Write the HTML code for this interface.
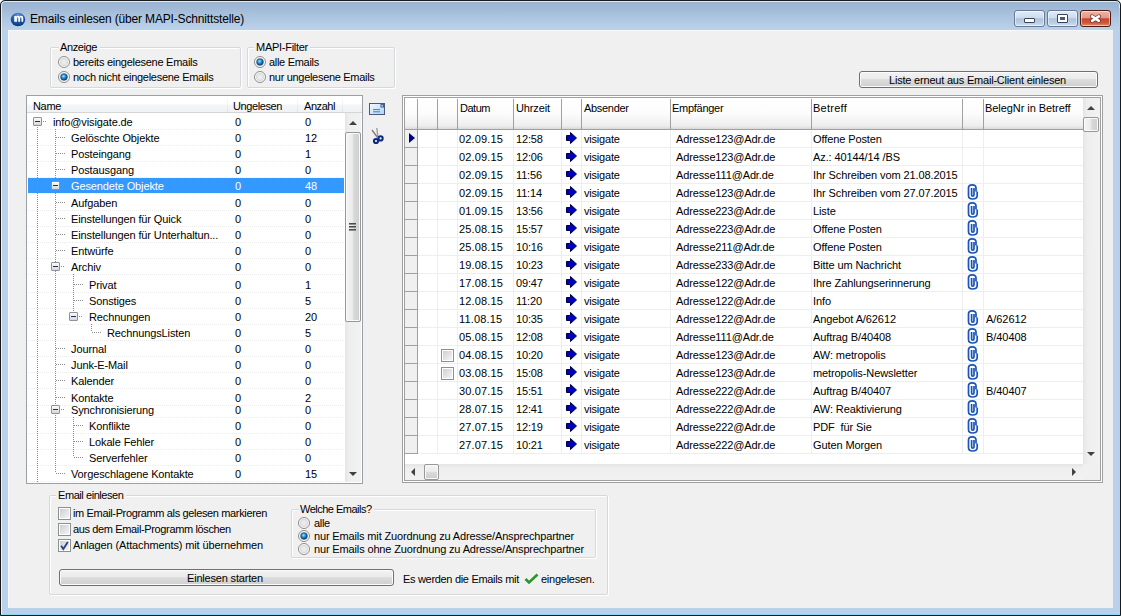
<!DOCTYPE html><html><head><meta charset="utf-8"><style>
*{margin:0;padding:0;box-sizing:border-box}
html,body{width:1121px;height:616px;overflow:hidden;background:#fff}
body{position:relative;font-family:"Liberation Sans",sans-serif;font-size:11px;color:#000}
.ab{position:absolute}
.t{position:absolute;white-space:pre;line-height:13px;font-size:11px}
.grp{position:absolute;border:1px solid #d6d9dc;border-radius:2px;box-shadow:inset 1px 1px 0 #fff,1px 1px 0 #fff}
.lblbg{position:absolute;background:#f0f0f0;height:9px}
.chk{position:absolute;width:13px;height:13px;border:1px solid #8e8f8f;background:#fff}
.chk::after{content:"";position:absolute;left:1px;top:1px;width:9px;height:9px;background:linear-gradient(135deg,#cbcfd5,#f4f4f4)}
.btn{position:absolute;border:1px solid #707070;border-radius:3px;
 background:linear-gradient(#f2f2f2 0,#ebebeb 45%,#dddddd 50%,#cfcfcf 100%);box-shadow:inset 0 0 0 1px #fbfbfb}
.dotv{position:absolute;width:1px;background:repeating-linear-gradient(#8c8c8c 0 1px,transparent 1px 2px)}
.doth{position:absolute;height:1px;background:repeating-linear-gradient(90deg,#8c8c8c 0 1px,transparent 1px 2px)}
.rsep{position:absolute;height:1px;left:28px;width:316px;background:repeating-linear-gradient(90deg,#ececec 0 1px,transparent 1px 2px)}
.exp{position:absolute;width:9px;height:9px;border:1px solid #919191;border-radius:1px;background:linear-gradient(#fbfbfb,#d8d8d8)}
.exp::after{content:"";position:absolute;left:1px;top:3px;width:5px;height:1px;background:#1f2f5a}
.gl{position:absolute;background:#eeeeee}
</style></head><body>
<svg width="0" height="0" style="position:absolute"><defs>
<radialGradient id="rf" cx="50%" cy="50%" r="50%"><stop offset="0" stop-color="#f0f0f0"/><stop offset="0.7" stop-color="#e4e4e4"/><stop offset="1" stop-color="#d2d2d2"/></radialGradient>
<radialGradient id="rd" cx="42%" cy="38%" r="60%"><stop offset="0" stop-color="#9ee6ff"/><stop offset="0.45" stop-color="#2a9ad8"/><stop offset="1" stop-color="#0a3f78"/></radialGradient>
</defs></svg>
<div class="ab" style="left:0;top:0;width:1121px;height:616px;background:#b9d1ea;border-radius:5px 5px 0 0"></div>
<div class="ab" style="left:0;top:0;width:1121px;height:31px;border-radius:5px 5px 0 0;background:linear-gradient(#98b2cf 0,#9fb9d6 8px,#adc6e1 18px,#bad1e9 29px,#bcd3eb 31px)"></div>
<div class="ab" style="left:0;top:0;width:1121px;height:616px;border:1px solid #1a1a1a;border-radius:5px 5px 0 0;box-shadow:inset 0 0 0 1px rgba(255,255,255,.7)"></div>
<div class="ab" style="left:1px;top:614px;width:1119px;height:1px;background:#8fd6ee"></div>
<div class="ab" style="left:1119px;top:8px;width:1px;height:607px;background:#9edcf2"></div>
<svg class="ab" style="left:10px;top:12px" width="17" height="16" viewBox="0 0 17 16">
<defs><radialGradient id="ig" cx="50%" cy="25%" r="80%"><stop offset="0" stop-color="#6f9be0"/><stop offset="0.55" stop-color="#1f56a8"/><stop offset="1" stop-color="#0a2c6a"/></radialGradient></defs>
<ellipse cx="8" cy="7.5" rx="7.2" ry="6.8" fill="url(#ig)"/>
<path d="M4.3 9.8V4H6.1V4.7Q6.8 3.8 7.9 3.8Q9 3.8 9.5 4.8Q10.3 3.8 11.5 3.8Q13.2 3.8 13.2 6V9.8H11.5V6.4Q11.5 5.3 10.8 5.3Q10 5.3 10 6.4V9.8H8.3V6.4Q8.3 5.3 7.6 5.3Q6.9 5.3 6.9 6.4V9.8Z" fill="#fff"/>
</svg>
<div class="t" style="left:30px;top:12px;font-size:12px;letter-spacing:-0.165px;line-height:15px;">Emails einlesen (über MAPI-Schnittstelle)</div>
<div class="ab" style="left:1014px;top:10px;width:31px;height:17px;border:1px solid #6a7a95;border-radius:3px;background:linear-gradient(#e1ebf6 0,#cddcee 45%,#aec3dc 52%,#bccfe6 80%,#d3e3f4 100%);box-shadow:inset 0 0 0 1px rgba(255,255,255,.5)"></div>
<div class="ab" style="left:1047px;top:10px;width:31px;height:17px;border:1px solid #6a7a95;border-radius:3px;background:linear-gradient(#e1ebf6 0,#cddcee 45%,#aec3dc 52%,#bccfe6 80%,#d3e3f4 100%);box-shadow:inset 0 0 0 1px rgba(255,255,255,.5)"></div>
<div class="ab" style="left:1080px;top:10px;width:31px;height:17px;border:1px solid #4a1c16;border-radius:3px;background:linear-gradient(#eeb3a6 0,#e49a88 45%,#c9452c 52%,#d0583c 80%,#e38e6e 100%);box-shadow:inset 0 0 0 1px rgba(255,255,255,.5)"></div>
<div class="ab" style="left:1024px;top:18px;width:11px;height:5px;background:#fff;border:1px solid #3a4458;border-radius:1px"></div>
<div class="ab" style="left:1057px;top:14px;width:11px;height:9px;background:#fff;border:1px solid #3a4458;border-radius:1px"></div>
<div class="ab" style="left:1060px;top:17px;width:5px;height:3px;background:#4a5a75;"></div>
<svg class="ab" style="left:1089px;top:13px" width="12" height="11" viewBox="0 0 12 11">
<path d="M3.1 3.4L9.9 7.8M9.9 3.4L3.1 7.8" stroke="#5a3030" stroke-opacity=".85" stroke-width="4.2" stroke-linecap="round"/>
<path d="M3.1 3.4L9.9 7.8M9.9 3.4L3.1 7.8" stroke="#fff" stroke-width="2.6" stroke-linecap="round"/>
</svg>
<div class="ab" style="left:8px;top:30px;width:1105px;height:578px;background:#f0f0f0;border:1px solid #f6f9fc;border-right:0;border-bottom:0"></div>
<div class="grp" style="left:50px;top:47px;width:191px;height:41px"></div>
<div class="lblbg" style="left:59px;top:45px;width:41px"></div>
<div class="t" style="left:60px;top:41px;letter-spacing:-0.395px;">Anzeige</div>
<svg class="ab" style="left:58px;top:56px" width="12" height="12" viewBox="0 0 12 12"><circle cx="6" cy="6" r="5.5" fill="#fff" stroke="#8a8a8a" stroke-width="1"/><circle cx="6" cy="6" r="4.2" fill="url(#rf)"/></svg>
<div class="t" style="left:73px;top:56px;letter-spacing:-0.268px;">bereits eingelesene Emails</div>
<svg class="ab" style="left:58px;top:71px" width="12" height="12" viewBox="0 0 12 12"><circle cx="6" cy="6" r="5.5" fill="#fff" stroke="#8a8a8a" stroke-width="1"/><circle cx="6" cy="6" r="4.2" fill="url(#rf)"/><circle cx="6" cy="6" r="3.3" fill="url(#rd)" stroke="#123f70" stroke-width="0.6"/></svg>
<div class="t" style="left:73px;top:71px;letter-spacing:-0.279px;">noch nicht eingelesene Emails</div>
<div class="grp" style="left:247px;top:47px;width:148px;height:41px"></div>
<div class="lblbg" style="left:254px;top:45px;width:56px"></div>
<div class="t" style="left:256px;top:41px;letter-spacing:-0.273px;">MAPI-Filter</div>
<svg class="ab" style="left:254px;top:56px" width="12" height="12" viewBox="0 0 12 12"><circle cx="6" cy="6" r="5.5" fill="#fff" stroke="#8a8a8a" stroke-width="1"/><circle cx="6" cy="6" r="4.2" fill="url(#rf)"/><circle cx="6" cy="6" r="3.3" fill="url(#rd)" stroke="#123f70" stroke-width="0.6"/></svg>
<div class="t" style="left:269px;top:56px;letter-spacing:-0.3px;">alle Emails</div>
<svg class="ab" style="left:254px;top:71px" width="12" height="12" viewBox="0 0 12 12"><circle cx="6" cy="6" r="5.5" fill="#fff" stroke="#8a8a8a" stroke-width="1"/><circle cx="6" cy="6" r="4.2" fill="url(#rf)"/></svg>
<div class="t" style="left:269px;top:71px;letter-spacing:-0.305px;">nur ungelesene Emails</div>
<div class="btn" style="left:859px;top:71px;width:239px;height:17px"></div>
<div class="t" style="left:889px;top:74px;letter-spacing:-0.201px;">Liste erneut aus Email-Client einlesen</div>
<div class="ab" style="left:26px;top:95px;width:337px;height:389px;background:#fff;border:1px solid #9aa0a8"></div>
<div class="ab" style="left:27px;top:96px;width:335px;height:17px;background:linear-gradient(#fff 0,#fff 45%,#f4f5f7 55%,#eff1f4 100%)"></div>
<div class="ab" style="left:27px;top:112px;width:335px;height:1px;background:#d5d5d5"></div>
<div class="ab" style="left:227px;top:96px;width:1px;height:16px;background:linear-gradient(#fff,#dfe3e8)"></div>
<div class="ab" style="left:297px;top:96px;width:1px;height:16px;background:linear-gradient(#fff,#dfe3e8)"></div>
<div class="ab" style="left:342px;top:96px;width:1px;height:16px;background:linear-gradient(#fff,#dfe3e8)"></div>
<div class="t" style="left:33px;top:100px;letter-spacing:-0.336px;">Name</div>
<div class="t" style="left:233px;top:100px;letter-spacing:-0.399px;">Ungelesen</div>
<div class="t" style="left:304px;top:100px;letter-spacing:-0.440px;">Anzahl</div>
<div class="rsep" style="top:129px"></div>
<div class="rsep" style="top:145px"></div>
<div class="rsep" style="top:161px"></div>
<div class="rsep" style="top:177px"></div>
<div class="rsep" style="top:193px"></div>
<div class="rsep" style="top:210px"></div>
<div class="rsep" style="top:226px"></div>
<div class="rsep" style="top:242px"></div>
<div class="rsep" style="top:258px"></div>
<div class="rsep" style="top:274px"></div>
<div class="rsep" style="top:292px"></div>
<div class="rsep" style="top:308px"></div>
<div class="rsep" style="top:324px"></div>
<div class="rsep" style="top:340px"></div>
<div class="rsep" style="top:356px"></div>
<div class="rsep" style="top:372px"></div>
<div class="rsep" style="top:388px"></div>
<div class="rsep" style="top:405px"></div>
<div class="rsep" style="top:417px"></div>
<div class="rsep" style="top:433px"></div>
<div class="rsep" style="top:449px"></div>
<div class="rsep" style="top:465px"></div>
<div class="rsep" style="top:481px"></div>
<div class="ab" style="left:28px;top:178px;width:316px;height:15px;background:#3399ff"></div>
<div class="dotv" style="left:37px;top:127px;height:355px"></div>
<div class="dotv" style="left:55px;top:129px;height:344px"></div>
<div class="dotv" style="left:73px;top:274px;height:42px"></div>
<div class="dotv" style="left:91px;top:324px;height:8px"></div>
<div class="dotv" style="left:73px;top:417px;height:40px"></div>
<div class="exp" style="left:33px;top:117px"></div>
<div class="doth" style="left:43px;top:121px;width:4px"></div>
<div class="t" style="left:53px;top:116px;letter-spacing:-0.12px;">info@visigate.de</div>
<div class="t" style="left:235px;top:116px;">0</div>
<div class="t" style="left:305px;top:116px;">0</div>
<div class="doth" style="left:56px;top:137px;width:9px"></div>
<div class="t" style="left:71px;top:132px;letter-spacing:-0.12px;">Gelöschte Objekte</div>
<div class="t" style="left:235px;top:132px;">0</div>
<div class="t" style="left:305px;top:132px;">12</div>
<div class="doth" style="left:56px;top:153px;width:9px"></div>
<div class="t" style="left:71px;top:148px;letter-spacing:-0.12px;">Posteingang</div>
<div class="t" style="left:235px;top:148px;">0</div>
<div class="t" style="left:305px;top:148px;">1</div>
<div class="doth" style="left:56px;top:169px;width:9px"></div>
<div class="t" style="left:71px;top:164px;letter-spacing:-0.12px;">Postausgang</div>
<div class="t" style="left:235px;top:164px;">0</div>
<div class="t" style="left:305px;top:164px;">0</div>
<div class="exp" style="left:51px;top:181px"></div>
<div class="doth" style="left:61px;top:185px;width:4px"></div>
<div class="t" style="left:71px;top:180px;letter-spacing:-0.12px;color:#fff;">Gesendete Objekte</div>
<div class="t" style="left:235px;top:180px;color:#fff;">0</div>
<div class="t" style="left:305px;top:180px;color:#fff;">48</div>
<div class="doth" style="left:56px;top:202px;width:9px"></div>
<div class="t" style="left:71px;top:197px;letter-spacing:-0.12px;">Aufgaben</div>
<div class="t" style="left:235px;top:197px;">0</div>
<div class="t" style="left:305px;top:197px;">0</div>
<div class="doth" style="left:56px;top:218px;width:9px"></div>
<div class="t" style="left:71px;top:213px;letter-spacing:-0.12px;">Einstellungen für Quick</div>
<div class="t" style="left:235px;top:213px;">0</div>
<div class="t" style="left:305px;top:213px;">0</div>
<div class="doth" style="left:56px;top:234px;width:9px"></div>
<div class="t" style="left:71px;top:229px;letter-spacing:-0.12px;">Einstellungen für Unterhaltun...</div>
<div class="t" style="left:235px;top:229px;">0</div>
<div class="t" style="left:305px;top:229px;">0</div>
<div class="doth" style="left:56px;top:250px;width:9px"></div>
<div class="t" style="left:71px;top:245px;letter-spacing:-0.12px;">Entwürfe</div>
<div class="t" style="left:235px;top:245px;">0</div>
<div class="t" style="left:305px;top:245px;">0</div>
<div class="exp" style="left:51px;top:262px"></div>
<div class="doth" style="left:61px;top:266px;width:4px"></div>
<div class="t" style="left:71px;top:261px;letter-spacing:-0.12px;">Archiv</div>
<div class="t" style="left:235px;top:261px;">0</div>
<div class="t" style="left:305px;top:261px;">0</div>
<div class="doth" style="left:74px;top:284px;width:9px"></div>
<div class="t" style="left:89px;top:279px;letter-spacing:-0.12px;">Privat</div>
<div class="t" style="left:235px;top:279px;">0</div>
<div class="t" style="left:305px;top:279px;">1</div>
<div class="doth" style="left:74px;top:300px;width:9px"></div>
<div class="t" style="left:89px;top:295px;letter-spacing:-0.12px;">Sonstiges</div>
<div class="t" style="left:235px;top:295px;">0</div>
<div class="t" style="left:305px;top:295px;">5</div>
<div class="exp" style="left:69px;top:312px"></div>
<div class="doth" style="left:79px;top:316px;width:4px"></div>
<div class="t" style="left:89px;top:311px;letter-spacing:-0.12px;">Rechnungen</div>
<div class="t" style="left:235px;top:311px;">0</div>
<div class="t" style="left:305px;top:311px;">20</div>
<div class="doth" style="left:92px;top:332px;width:9px"></div>
<div class="t" style="left:107px;top:327px;letter-spacing:-0.12px;">RechnungsListen</div>
<div class="t" style="left:235px;top:327px;">0</div>
<div class="t" style="left:305px;top:327px;">5</div>
<div class="doth" style="left:56px;top:348px;width:9px"></div>
<div class="t" style="left:71px;top:343px;letter-spacing:-0.12px;">Journal</div>
<div class="t" style="left:235px;top:343px;">0</div>
<div class="t" style="left:305px;top:343px;">0</div>
<div class="doth" style="left:56px;top:364px;width:9px"></div>
<div class="t" style="left:71px;top:359px;letter-spacing:-0.12px;">Junk-E-Mail</div>
<div class="t" style="left:235px;top:359px;">0</div>
<div class="t" style="left:305px;top:359px;">0</div>
<div class="doth" style="left:56px;top:380px;width:9px"></div>
<div class="t" style="left:71px;top:375px;letter-spacing:-0.12px;">Kalender</div>
<div class="t" style="left:235px;top:375px;">0</div>
<div class="t" style="left:305px;top:375px;">0</div>
<div class="doth" style="left:56px;top:397px;width:9px"></div>
<div class="t" style="left:71px;top:392px;letter-spacing:-0.12px;">Kontakte</div>
<div class="t" style="left:235px;top:392px;">0</div>
<div class="t" style="left:305px;top:392px;">2</div>
<div class="exp" style="left:51px;top:405px"></div>
<div class="doth" style="left:61px;top:409px;width:4px"></div>
<div class="t" style="left:71px;top:404px;letter-spacing:-0.12px;">Synchronisierung</div>
<div class="t" style="left:235px;top:404px;">0</div>
<div class="t" style="left:305px;top:404px;">0</div>
<div class="doth" style="left:74px;top:425px;width:9px"></div>
<div class="t" style="left:89px;top:420px;letter-spacing:-0.12px;">Konflikte</div>
<div class="t" style="left:235px;top:420px;">0</div>
<div class="t" style="left:305px;top:420px;">0</div>
<div class="doth" style="left:74px;top:441px;width:9px"></div>
<div class="t" style="left:89px;top:436px;letter-spacing:-0.12px;">Lokale Fehler</div>
<div class="t" style="left:235px;top:436px;">0</div>
<div class="t" style="left:305px;top:436px;">0</div>
<div class="doth" style="left:74px;top:457px;width:9px"></div>
<div class="t" style="left:89px;top:452px;letter-spacing:-0.12px;">Serverfehler</div>
<div class="t" style="left:235px;top:452px;">0</div>
<div class="t" style="left:305px;top:452px;">0</div>
<div class="doth" style="left:56px;top:473px;width:9px"></div>
<div class="t" style="left:71px;top:468px;letter-spacing:-0.12px;">Vorgeschlagene Kontakte</div>
<div class="t" style="left:235px;top:468px;">0</div>
<div class="t" style="left:305px;top:468px;">15</div>
<div class="ab" style="left:345px;top:113px;width:16px;height:369px;background:linear-gradient(90deg,#e5e5e5 0,#eeeeee 25%,#f2f2f2 100%)"></div>
<div class="ab" style="left:349px;top:121px;width:0;height:0;border-left:4px solid transparent;border-right:4px solid transparent;border-bottom:4px solid #404040"></div>
<div class="ab" style="left:349px;top:472px;width:0;height:0;border-left:4px solid transparent;border-right:4px solid transparent;border-top:4px solid #404040"></div>
<div class="ab" style="left:345px;top:132px;width:16px;height:190px;border:1px solid #979797;border-radius:2px;background:linear-gradient(90deg,#f4f4f4 0,#ececec 45%,#d9d9d9 55%,#cdcdcd 100%);box-shadow:inset 0 0 0 1px #fafafa"></div>
<div class="ab" style="left:349px;top:223px;width:7px;height:2px;background:linear-gradient(#2a2a2a,#b0b0b0)"></div>
<div class="ab" style="left:349px;top:226px;width:7px;height:2px;background:linear-gradient(#2a2a2a,#b0b0b0)"></div>
<div class="ab" style="left:349px;top:229px;width:7px;height:2px;background:linear-gradient(#2a2a2a,#b0b0b0)"></div>
<svg class="ab" style="left:368px;top:102px" width="18" height="14" viewBox="0 0 18 14">
<defs><linearGradient id="eg" x1="0" y1="0" x2="1" y2="1"><stop offset="0" stop-color="#f5fbff"/><stop offset="1" stop-color="#a9d3f5"/></linearGradient></defs>
<rect x="1.5" y="1.5" width="15" height="11" fill="url(#eg)" stroke="#4c5a78" stroke-width="1"/>
<rect x="12.5" y="2" width="3.5" height="3.5" fill="#3a5a90"/><rect x="13.3" y="2.8" width="1.8" height="1.8" fill="#9cc4ee"/>
<path d="M5 7.6H12M5 9.8H12" stroke="#3a7fd0" stroke-width="1"/>
</svg>
<svg class="ab" style="left:370px;top:127px" width="15" height="18" viewBox="0 0 15 18">
<path d="M2 3L7.5 10.5" stroke="#7a7a7a" stroke-width="1.3"/><path d="M6.8 1L8 10.5" stroke="#9a9a9a" stroke-width="1.3"/>
<circle cx="6" cy="14" r="2.1" fill="none" stroke="#0c2a80" stroke-width="2"/><circle cx="10.6" cy="11.4" r="2.1" fill="none" stroke="#0c2a80" stroke-width="2"/>
</svg>
<div class="ab" style="left:402px;top:95px;width:701px;height:388px;border:1px solid #a0a0a0;background:#fff"></div>
<div class="ab" style="left:404px;top:97px;width:697px;height:384px;border:1px solid #a0a0a0;background:#fff"></div>
<div class="ab" style="left:405px;top:98px;width:678px;height:31px;background:linear-gradient(#fff 0,#fcfcfc 50%,#f3f3f3 75%,#eeeeee 90%,#d8d8d8 100%)"></div>
<div class="ab" style="left:405px;top:129px;width:678px;height:1px;background:#a0a0a0"></div>
<div class="ab" style="left:417px;top:99px;width:1px;height:30px;background:#a0a0a0"></div>
<div class="ab" style="left:437px;top:99px;width:1px;height:30px;background:#a0a0a0"></div>
<div class="ab" style="left:457px;top:99px;width:1px;height:30px;background:#a0a0a0"></div>
<div class="ab" style="left:513px;top:99px;width:1px;height:30px;background:#a0a0a0"></div>
<div class="ab" style="left:561px;top:99px;width:1px;height:30px;background:#a0a0a0"></div>
<div class="ab" style="left:581px;top:99px;width:1px;height:30px;background:#a0a0a0"></div>
<div class="ab" style="left:670px;top:99px;width:1px;height:30px;background:#a0a0a0"></div>
<div class="ab" style="left:811px;top:99px;width:1px;height:30px;background:#a0a0a0"></div>
<div class="ab" style="left:962px;top:99px;width:1px;height:30px;background:#a0a0a0"></div>
<div class="ab" style="left:983px;top:99px;width:1px;height:30px;background:#a0a0a0"></div>
<div class="t" style="left:460px;top:102px;letter-spacing:-0.481px;">Datum</div>
<div class="t" style="left:516px;top:102px;letter-spacing:-0.121px;">Uhrzeit</div>
<div class="t" style="left:584px;top:102px;letter-spacing:-0.312px;">Absender</div>
<div class="t" style="left:672px;top:102px;letter-spacing:-0.279px;">Empfänger</div>
<div class="t" style="left:813px;top:102px;letter-spacing:0.254px;">Betreff</div>
<div class="t" style="left:985px;top:102px;letter-spacing:-0.062px;">BelegNr in Betreff</div>
<div class="gl" style="left:437px;top:130px;width:1px;height:324px"></div>
<div class="gl" style="left:457px;top:130px;width:1px;height:324px"></div>
<div class="gl" style="left:513px;top:130px;width:1px;height:324px"></div>
<div class="gl" style="left:561px;top:130px;width:1px;height:324px"></div>
<div class="gl" style="left:581px;top:130px;width:1px;height:324px"></div>
<div class="gl" style="left:670px;top:130px;width:1px;height:324px"></div>
<div class="gl" style="left:811px;top:130px;width:1px;height:324px"></div>
<div class="gl" style="left:962px;top:130px;width:1px;height:324px"></div>
<div class="gl" style="left:983px;top:130px;width:1px;height:324px"></div>
<div class="ab" style="left:405px;top:130px;width:12px;height:324px;background:#f0f0f0"></div>
<div class="ab" style="left:417px;top:130px;width:1px;height:324px;background:#a0a0a0"></div>
<div class="gl" style="left:418px;top:147px;width:665px;height:1px"></div>
<div class="ab" style="left:405px;top:147px;width:12px;height:1px;background:#a0a0a0"></div>
<div class="t" style="left:459px;top:133px;letter-spacing:0.15px;">02.09.15</div>
<div class="t" style="left:516px;top:133px;letter-spacing:-0.15px;">12:58</div>
<svg class="ab" style="left:566px;top:132px" width="11" height="12" viewBox="0 0 11 12"><path d="M0.5 3.5H4.5V0.5L10.5 6L4.5 11.5V8.5H0.5Z" fill="#0000c0" stroke="#00004a" stroke-width="1"/></svg>
<div class="t" style="left:584px;top:133px;letter-spacing:-0.2px;">visigate</div>
<div class="t" style="left:676px;top:133px;letter-spacing:-0.14px;">Adresse123@Adr.de</div>
<div class="t" style="left:813px;top:133px;letter-spacing:-0.1px;">Offene Posten</div>
<div class="gl" style="left:418px;top:165px;width:665px;height:1px"></div>
<div class="ab" style="left:405px;top:165px;width:12px;height:1px;background:#a0a0a0"></div>
<div class="t" style="left:459px;top:151px;letter-spacing:0.15px;">02.09.15</div>
<div class="t" style="left:516px;top:151px;letter-spacing:-0.15px;">12:06</div>
<svg class="ab" style="left:566px;top:150px" width="11" height="12" viewBox="0 0 11 12"><path d="M0.5 3.5H4.5V0.5L10.5 6L4.5 11.5V8.5H0.5Z" fill="#0000c0" stroke="#00004a" stroke-width="1"/></svg>
<div class="t" style="left:584px;top:151px;letter-spacing:-0.2px;">visigate</div>
<div class="t" style="left:676px;top:151px;letter-spacing:-0.14px;">Adresse123@Adr.de</div>
<div class="t" style="left:813px;top:151px;letter-spacing:-0.1px;">Az.: 40144/14 /BS</div>
<div class="gl" style="left:418px;top:183px;width:665px;height:1px"></div>
<div class="ab" style="left:405px;top:183px;width:12px;height:1px;background:#a0a0a0"></div>
<div class="t" style="left:459px;top:169px;letter-spacing:0.15px;">02.09.15</div>
<div class="t" style="left:516px;top:169px;letter-spacing:-0.15px;">11:56</div>
<svg class="ab" style="left:566px;top:168px" width="11" height="12" viewBox="0 0 11 12"><path d="M0.5 3.5H4.5V0.5L10.5 6L4.5 11.5V8.5H0.5Z" fill="#0000c0" stroke="#00004a" stroke-width="1"/></svg>
<div class="t" style="left:584px;top:169px;letter-spacing:-0.2px;">visigate</div>
<div class="t" style="left:676px;top:169px;letter-spacing:-0.14px;">Adresse111@Adr.de</div>
<div class="t" style="left:813px;top:169px;letter-spacing:-0.1px;">Ihr Schreiben vom 21.08.2015</div>
<div class="gl" style="left:418px;top:201px;width:665px;height:1px"></div>
<div class="ab" style="left:405px;top:201px;width:12px;height:1px;background:#a0a0a0"></div>
<div class="t" style="left:459px;top:187px;letter-spacing:0.15px;">02.09.15</div>
<div class="t" style="left:516px;top:187px;letter-spacing:-0.15px;">11:14</div>
<svg class="ab" style="left:566px;top:186px" width="11" height="12" viewBox="0 0 11 12"><path d="M0.5 3.5H4.5V0.5L10.5 6L4.5 11.5V8.5H0.5Z" fill="#0000c0" stroke="#00004a" stroke-width="1"/></svg>
<div class="t" style="left:584px;top:187px;letter-spacing:-0.2px;">visigate</div>
<div class="t" style="left:676px;top:187px;letter-spacing:-0.14px;">Adresse123@Adr.de</div>
<div class="t" style="left:813px;top:187px;letter-spacing:-0.1px;">Ihr Schreiben vom 27.07.2015</div>
<svg class="ab" style="left:966px;top:183px" width="14" height="19" viewBox="0 0 14 19"><path d="M10 8.5V5Q10 1.8 6.2 1.8Q2.5 1.8 2.5 5V12.5Q2.5 16 6.5 16Q11.2 16 11.2 12.5V8.5M5.6 5V12Q5.6 13.2 6.8 13.2Q8 13.2 8 12V5" fill="none" stroke="#1a55b5" stroke-width="1.7"/></svg>
<div class="gl" style="left:418px;top:219px;width:665px;height:1px"></div>
<div class="ab" style="left:405px;top:219px;width:12px;height:1px;background:#a0a0a0"></div>
<div class="t" style="left:459px;top:205px;letter-spacing:0.15px;">01.09.15</div>
<div class="t" style="left:516px;top:205px;letter-spacing:-0.15px;">13:56</div>
<svg class="ab" style="left:566px;top:204px" width="11" height="12" viewBox="0 0 11 12"><path d="M0.5 3.5H4.5V0.5L10.5 6L4.5 11.5V8.5H0.5Z" fill="#0000c0" stroke="#00004a" stroke-width="1"/></svg>
<div class="t" style="left:584px;top:205px;letter-spacing:-0.2px;">visigate</div>
<div class="t" style="left:676px;top:205px;letter-spacing:-0.14px;">Adresse223@Adr.de</div>
<div class="t" style="left:813px;top:205px;letter-spacing:-0.1px;">Liste</div>
<svg class="ab" style="left:966px;top:201px" width="14" height="19" viewBox="0 0 14 19"><path d="M10 8.5V5Q10 1.8 6.2 1.8Q2.5 1.8 2.5 5V12.5Q2.5 16 6.5 16Q11.2 16 11.2 12.5V8.5M5.6 5V12Q5.6 13.2 6.8 13.2Q8 13.2 8 12V5" fill="none" stroke="#1a55b5" stroke-width="1.7"/></svg>
<div class="gl" style="left:418px;top:237px;width:665px;height:1px"></div>
<div class="ab" style="left:405px;top:237px;width:12px;height:1px;background:#a0a0a0"></div>
<div class="t" style="left:459px;top:223px;letter-spacing:0.15px;">25.08.15</div>
<div class="t" style="left:516px;top:223px;letter-spacing:-0.15px;">15:57</div>
<svg class="ab" style="left:566px;top:222px" width="11" height="12" viewBox="0 0 11 12"><path d="M0.5 3.5H4.5V0.5L10.5 6L4.5 11.5V8.5H0.5Z" fill="#0000c0" stroke="#00004a" stroke-width="1"/></svg>
<div class="t" style="left:584px;top:223px;letter-spacing:-0.2px;">visigate</div>
<div class="t" style="left:676px;top:223px;letter-spacing:-0.14px;">Adresse223@Adr.de</div>
<div class="t" style="left:813px;top:223px;letter-spacing:-0.1px;">Offene Posten</div>
<svg class="ab" style="left:966px;top:219px" width="14" height="19" viewBox="0 0 14 19"><path d="M10 8.5V5Q10 1.8 6.2 1.8Q2.5 1.8 2.5 5V12.5Q2.5 16 6.5 16Q11.2 16 11.2 12.5V8.5M5.6 5V12Q5.6 13.2 6.8 13.2Q8 13.2 8 12V5" fill="none" stroke="#1a55b5" stroke-width="1.7"/></svg>
<div class="gl" style="left:418px;top:255px;width:665px;height:1px"></div>
<div class="ab" style="left:405px;top:255px;width:12px;height:1px;background:#a0a0a0"></div>
<div class="t" style="left:459px;top:241px;letter-spacing:0.15px;">25.08.15</div>
<div class="t" style="left:516px;top:241px;letter-spacing:-0.15px;">10:16</div>
<svg class="ab" style="left:566px;top:240px" width="11" height="12" viewBox="0 0 11 12"><path d="M0.5 3.5H4.5V0.5L10.5 6L4.5 11.5V8.5H0.5Z" fill="#0000c0" stroke="#00004a" stroke-width="1"/></svg>
<div class="t" style="left:584px;top:241px;letter-spacing:-0.2px;">visigate</div>
<div class="t" style="left:676px;top:241px;letter-spacing:-0.14px;">Adresse211@Adr.de</div>
<div class="t" style="left:813px;top:241px;letter-spacing:-0.1px;">Offene Posten</div>
<svg class="ab" style="left:966px;top:237px" width="14" height="19" viewBox="0 0 14 19"><path d="M10 8.5V5Q10 1.8 6.2 1.8Q2.5 1.8 2.5 5V12.5Q2.5 16 6.5 16Q11.2 16 11.2 12.5V8.5M5.6 5V12Q5.6 13.2 6.8 13.2Q8 13.2 8 12V5" fill="none" stroke="#1a55b5" stroke-width="1.7"/></svg>
<div class="gl" style="left:418px;top:273px;width:665px;height:1px"></div>
<div class="ab" style="left:405px;top:273px;width:12px;height:1px;background:#a0a0a0"></div>
<div class="t" style="left:459px;top:259px;letter-spacing:0.15px;">19.08.15</div>
<div class="t" style="left:516px;top:259px;letter-spacing:-0.15px;">10:23</div>
<svg class="ab" style="left:566px;top:258px" width="11" height="12" viewBox="0 0 11 12"><path d="M0.5 3.5H4.5V0.5L10.5 6L4.5 11.5V8.5H0.5Z" fill="#0000c0" stroke="#00004a" stroke-width="1"/></svg>
<div class="t" style="left:584px;top:259px;letter-spacing:-0.2px;">visigate</div>
<div class="t" style="left:676px;top:259px;letter-spacing:-0.14px;">Adresse233@Adr.de</div>
<div class="t" style="left:813px;top:259px;letter-spacing:-0.1px;">Bitte um Nachricht</div>
<svg class="ab" style="left:966px;top:255px" width="14" height="19" viewBox="0 0 14 19"><path d="M10 8.5V5Q10 1.8 6.2 1.8Q2.5 1.8 2.5 5V12.5Q2.5 16 6.5 16Q11.2 16 11.2 12.5V8.5M5.6 5V12Q5.6 13.2 6.8 13.2Q8 13.2 8 12V5" fill="none" stroke="#1a55b5" stroke-width="1.7"/></svg>
<div class="gl" style="left:418px;top:291px;width:665px;height:1px"></div>
<div class="ab" style="left:405px;top:291px;width:12px;height:1px;background:#a0a0a0"></div>
<div class="t" style="left:459px;top:277px;letter-spacing:0.15px;">17.08.15</div>
<div class="t" style="left:516px;top:277px;letter-spacing:-0.15px;">09:47</div>
<svg class="ab" style="left:566px;top:276px" width="11" height="12" viewBox="0 0 11 12"><path d="M0.5 3.5H4.5V0.5L10.5 6L4.5 11.5V8.5H0.5Z" fill="#0000c0" stroke="#00004a" stroke-width="1"/></svg>
<div class="t" style="left:584px;top:277px;letter-spacing:-0.2px;">visigate</div>
<div class="t" style="left:676px;top:277px;letter-spacing:-0.14px;">Adresse122@Adr.de</div>
<div class="t" style="left:813px;top:277px;letter-spacing:-0.1px;">Ihre Zahlungserinnerung</div>
<svg class="ab" style="left:966px;top:273px" width="14" height="19" viewBox="0 0 14 19"><path d="M10 8.5V5Q10 1.8 6.2 1.8Q2.5 1.8 2.5 5V12.5Q2.5 16 6.5 16Q11.2 16 11.2 12.5V8.5M5.6 5V12Q5.6 13.2 6.8 13.2Q8 13.2 8 12V5" fill="none" stroke="#1a55b5" stroke-width="1.7"/></svg>
<div class="gl" style="left:418px;top:309px;width:665px;height:1px"></div>
<div class="ab" style="left:405px;top:309px;width:12px;height:1px;background:#a0a0a0"></div>
<div class="t" style="left:459px;top:295px;letter-spacing:0.15px;">12.08.15</div>
<div class="t" style="left:516px;top:295px;letter-spacing:-0.15px;">11:20</div>
<svg class="ab" style="left:566px;top:294px" width="11" height="12" viewBox="0 0 11 12"><path d="M0.5 3.5H4.5V0.5L10.5 6L4.5 11.5V8.5H0.5Z" fill="#0000c0" stroke="#00004a" stroke-width="1"/></svg>
<div class="t" style="left:584px;top:295px;letter-spacing:-0.2px;">visigate</div>
<div class="t" style="left:676px;top:295px;letter-spacing:-0.14px;">Adresse122@Adr.de</div>
<div class="t" style="left:813px;top:295px;letter-spacing:-0.1px;">Info</div>
<div class="gl" style="left:418px;top:327px;width:665px;height:1px"></div>
<div class="ab" style="left:405px;top:327px;width:12px;height:1px;background:#a0a0a0"></div>
<div class="t" style="left:459px;top:313px;letter-spacing:0.15px;">11.08.15</div>
<div class="t" style="left:516px;top:313px;letter-spacing:-0.15px;">10:35</div>
<svg class="ab" style="left:566px;top:312px" width="11" height="12" viewBox="0 0 11 12"><path d="M0.5 3.5H4.5V0.5L10.5 6L4.5 11.5V8.5H0.5Z" fill="#0000c0" stroke="#00004a" stroke-width="1"/></svg>
<div class="t" style="left:584px;top:313px;letter-spacing:-0.2px;">visigate</div>
<div class="t" style="left:676px;top:313px;letter-spacing:-0.14px;">Adresse122@Adr.de</div>
<div class="t" style="left:813px;top:313px;letter-spacing:-0.1px;">Angebot A/62612</div>
<svg class="ab" style="left:966px;top:309px" width="14" height="19" viewBox="0 0 14 19"><path d="M10 8.5V5Q10 1.8 6.2 1.8Q2.5 1.8 2.5 5V12.5Q2.5 16 6.5 16Q11.2 16 11.2 12.5V8.5M5.6 5V12Q5.6 13.2 6.8 13.2Q8 13.2 8 12V5" fill="none" stroke="#1a55b5" stroke-width="1.7"/></svg>
<div class="t" style="left:986px;top:313px;letter-spacing:-0.06px;">A/62612</div>
<div class="gl" style="left:418px;top:345px;width:665px;height:1px"></div>
<div class="ab" style="left:405px;top:345px;width:12px;height:1px;background:#a0a0a0"></div>
<div class="t" style="left:459px;top:331px;letter-spacing:0.15px;">05.08.15</div>
<div class="t" style="left:516px;top:331px;letter-spacing:-0.15px;">12:08</div>
<svg class="ab" style="left:566px;top:330px" width="11" height="12" viewBox="0 0 11 12"><path d="M0.5 3.5H4.5V0.5L10.5 6L4.5 11.5V8.5H0.5Z" fill="#0000c0" stroke="#00004a" stroke-width="1"/></svg>
<div class="t" style="left:584px;top:331px;letter-spacing:-0.2px;">visigate</div>
<div class="t" style="left:676px;top:331px;letter-spacing:-0.14px;">Adresse111@Adr.de</div>
<div class="t" style="left:813px;top:331px;letter-spacing:-0.1px;">Auftrag B/40408</div>
<svg class="ab" style="left:966px;top:327px" width="14" height="19" viewBox="0 0 14 19"><path d="M10 8.5V5Q10 1.8 6.2 1.8Q2.5 1.8 2.5 5V12.5Q2.5 16 6.5 16Q11.2 16 11.2 12.5V8.5M5.6 5V12Q5.6 13.2 6.8 13.2Q8 13.2 8 12V5" fill="none" stroke="#1a55b5" stroke-width="1.7"/></svg>
<div class="t" style="left:986px;top:331px;letter-spacing:-0.06px;">B/40408</div>
<div class="gl" style="left:418px;top:363px;width:665px;height:1px"></div>
<div class="ab" style="left:405px;top:363px;width:12px;height:1px;background:#a0a0a0"></div>
<div class="t" style="left:459px;top:349px;letter-spacing:0.15px;">04.08.15</div>
<div class="t" style="left:516px;top:349px;letter-spacing:-0.15px;">10:20</div>
<svg class="ab" style="left:566px;top:348px" width="11" height="12" viewBox="0 0 11 12"><path d="M0.5 3.5H4.5V0.5L10.5 6L4.5 11.5V8.5H0.5Z" fill="#0000c0" stroke="#00004a" stroke-width="1"/></svg>
<div class="t" style="left:584px;top:349px;letter-spacing:-0.2px;">visigate</div>
<div class="t" style="left:676px;top:349px;letter-spacing:-0.14px;">Adresse123@Adr.de</div>
<div class="t" style="left:813px;top:349px;letter-spacing:-0.1px;">AW: metropolis</div>
<svg class="ab" style="left:966px;top:345px" width="14" height="19" viewBox="0 0 14 19"><path d="M10 8.5V5Q10 1.8 6.2 1.8Q2.5 1.8 2.5 5V12.5Q2.5 16 6.5 16Q11.2 16 11.2 12.5V8.5M5.6 5V12Q5.6 13.2 6.8 13.2Q8 13.2 8 12V5" fill="none" stroke="#1a55b5" stroke-width="1.7"/></svg>
<div class="chk" style="left:441px;top:349px"></div>
<div class="gl" style="left:418px;top:381px;width:665px;height:1px"></div>
<div class="ab" style="left:405px;top:381px;width:12px;height:1px;background:#a0a0a0"></div>
<div class="t" style="left:459px;top:367px;letter-spacing:0.15px;">03.08.15</div>
<div class="t" style="left:516px;top:367px;letter-spacing:-0.15px;">15:08</div>
<svg class="ab" style="left:566px;top:366px" width="11" height="12" viewBox="0 0 11 12"><path d="M0.5 3.5H4.5V0.5L10.5 6L4.5 11.5V8.5H0.5Z" fill="#0000c0" stroke="#00004a" stroke-width="1"/></svg>
<div class="t" style="left:584px;top:367px;letter-spacing:-0.2px;">visigate</div>
<div class="t" style="left:676px;top:367px;letter-spacing:-0.14px;">Adresse123@Adr.de</div>
<div class="t" style="left:813px;top:367px;letter-spacing:-0.1px;">metropolis-Newsletter</div>
<svg class="ab" style="left:966px;top:363px" width="14" height="19" viewBox="0 0 14 19"><path d="M10 8.5V5Q10 1.8 6.2 1.8Q2.5 1.8 2.5 5V12.5Q2.5 16 6.5 16Q11.2 16 11.2 12.5V8.5M5.6 5V12Q5.6 13.2 6.8 13.2Q8 13.2 8 12V5" fill="none" stroke="#1a55b5" stroke-width="1.7"/></svg>
<div class="chk" style="left:441px;top:367px"></div>
<div class="gl" style="left:418px;top:399px;width:665px;height:1px"></div>
<div class="ab" style="left:405px;top:399px;width:12px;height:1px;background:#a0a0a0"></div>
<div class="t" style="left:459px;top:385px;letter-spacing:0.15px;">30.07.15</div>
<div class="t" style="left:516px;top:385px;letter-spacing:-0.15px;">15:51</div>
<svg class="ab" style="left:566px;top:384px" width="11" height="12" viewBox="0 0 11 12"><path d="M0.5 3.5H4.5V0.5L10.5 6L4.5 11.5V8.5H0.5Z" fill="#0000c0" stroke="#00004a" stroke-width="1"/></svg>
<div class="t" style="left:584px;top:385px;letter-spacing:-0.2px;">visigate</div>
<div class="t" style="left:676px;top:385px;letter-spacing:-0.14px;">Adresse222@Adr.de</div>
<div class="t" style="left:813px;top:385px;letter-spacing:-0.1px;">Auftrag B/40407</div>
<svg class="ab" style="left:966px;top:381px" width="14" height="19" viewBox="0 0 14 19"><path d="M10 8.5V5Q10 1.8 6.2 1.8Q2.5 1.8 2.5 5V12.5Q2.5 16 6.5 16Q11.2 16 11.2 12.5V8.5M5.6 5V12Q5.6 13.2 6.8 13.2Q8 13.2 8 12V5" fill="none" stroke="#1a55b5" stroke-width="1.7"/></svg>
<div class="t" style="left:986px;top:385px;letter-spacing:-0.06px;">B/40407</div>
<div class="gl" style="left:418px;top:417px;width:665px;height:1px"></div>
<div class="ab" style="left:405px;top:417px;width:12px;height:1px;background:#a0a0a0"></div>
<div class="t" style="left:459px;top:403px;letter-spacing:0.15px;">28.07.15</div>
<div class="t" style="left:516px;top:403px;letter-spacing:-0.15px;">12:41</div>
<svg class="ab" style="left:566px;top:402px" width="11" height="12" viewBox="0 0 11 12"><path d="M0.5 3.5H4.5V0.5L10.5 6L4.5 11.5V8.5H0.5Z" fill="#0000c0" stroke="#00004a" stroke-width="1"/></svg>
<div class="t" style="left:584px;top:403px;letter-spacing:-0.2px;">visigate</div>
<div class="t" style="left:676px;top:403px;letter-spacing:-0.14px;">Adresse222@Adr.de</div>
<div class="t" style="left:813px;top:403px;letter-spacing:-0.1px;">AW: Reaktivierung</div>
<svg class="ab" style="left:966px;top:399px" width="14" height="19" viewBox="0 0 14 19"><path d="M10 8.5V5Q10 1.8 6.2 1.8Q2.5 1.8 2.5 5V12.5Q2.5 16 6.5 16Q11.2 16 11.2 12.5V8.5M5.6 5V12Q5.6 13.2 6.8 13.2Q8 13.2 8 12V5" fill="none" stroke="#1a55b5" stroke-width="1.7"/></svg>
<div class="gl" style="left:418px;top:435px;width:665px;height:1px"></div>
<div class="ab" style="left:405px;top:435px;width:12px;height:1px;background:#a0a0a0"></div>
<div class="t" style="left:459px;top:421px;letter-spacing:0.15px;">27.07.15</div>
<div class="t" style="left:516px;top:421px;letter-spacing:-0.15px;">12:19</div>
<svg class="ab" style="left:566px;top:420px" width="11" height="12" viewBox="0 0 11 12"><path d="M0.5 3.5H4.5V0.5L10.5 6L4.5 11.5V8.5H0.5Z" fill="#0000c0" stroke="#00004a" stroke-width="1"/></svg>
<div class="t" style="left:584px;top:421px;letter-spacing:-0.2px;">visigate</div>
<div class="t" style="left:676px;top:421px;letter-spacing:-0.14px;">Adresse222@Adr.de</div>
<div class="t" style="left:813px;top:421px;letter-spacing:-0.1px;">PDF  für Sie</div>
<svg class="ab" style="left:966px;top:417px" width="14" height="19" viewBox="0 0 14 19"><path d="M10 8.5V5Q10 1.8 6.2 1.8Q2.5 1.8 2.5 5V12.5Q2.5 16 6.5 16Q11.2 16 11.2 12.5V8.5M5.6 5V12Q5.6 13.2 6.8 13.2Q8 13.2 8 12V5" fill="none" stroke="#1a55b5" stroke-width="1.7"/></svg>
<div class="gl" style="left:418px;top:453px;width:665px;height:1px"></div>
<div class="ab" style="left:405px;top:453px;width:12px;height:1px;background:#a0a0a0"></div>
<div class="t" style="left:459px;top:439px;letter-spacing:0.15px;">27.07.15</div>
<div class="t" style="left:516px;top:439px;letter-spacing:-0.15px;">10:21</div>
<svg class="ab" style="left:566px;top:438px" width="11" height="12" viewBox="0 0 11 12"><path d="M0.5 3.5H4.5V0.5L10.5 6L4.5 11.5V8.5H0.5Z" fill="#0000c0" stroke="#00004a" stroke-width="1"/></svg>
<div class="t" style="left:584px;top:439px;letter-spacing:-0.2px;">visigate</div>
<div class="t" style="left:676px;top:439px;letter-spacing:-0.14px;">Adresse222@Adr.de</div>
<div class="t" style="left:813px;top:439px;letter-spacing:-0.1px;">Guten Morgen</div>
<svg class="ab" style="left:966px;top:435px" width="14" height="19" viewBox="0 0 14 19"><path d="M10 8.5V5Q10 1.8 6.2 1.8Q2.5 1.8 2.5 5V12.5Q2.5 16 6.5 16Q11.2 16 11.2 12.5V8.5M5.6 5V12Q5.6 13.2 6.8 13.2Q8 13.2 8 12V5" fill="none" stroke="#1a55b5" stroke-width="1.7"/></svg>
<div class="ab" style="left:409px;top:133px;width:0;height:0;border-top:5px solid transparent;border-bottom:5px solid transparent;border-left:6px solid #000080"></div>
<div class="ab" style="left:1083px;top:98px;width:17px;height:366px;background:linear-gradient(90deg,#e5e5e5 0,#eeeeee 25%,#f2f2f2 100%)"></div>
<div class="ab" style="left:1087px;top:106px;width:0;height:0;border-left:4px solid transparent;border-right:4px solid transparent;border-bottom:4px solid #404040"></div>
<div class="ab" style="left:1087px;top:452px;width:0;height:0;border-left:4px solid transparent;border-right:4px solid transparent;border-top:4px solid #404040"></div>
<div class="ab" style="left:1083px;top:117px;width:16px;height:15px;border:1px solid #979797;border-radius:2px;background:linear-gradient(90deg,#f4f4f4 0,#ececec 45%,#d9d9d9 55%,#cdcdcd 100%);box-shadow:inset 0 0 0 1px #fafafa"></div>
<div class="ab" style="left:405px;top:464px;width:695px;height:16px;background:linear-gradient(#e5e5e5 0,#eeeeee 25%,#f2f2f2 100%)"></div>
<div class="ab" style="left:411px;top:468px;width:0;height:0;border-top:4px solid transparent;border-bottom:4px solid transparent;border-right:4px solid #404040"></div>
<div class="ab" style="left:1072px;top:468px;width:0;height:0;border-top:4px solid transparent;border-bottom:4px solid transparent;border-left:4px solid #404040"></div>
<div class="ab" style="left:424px;top:464px;width:15px;height:16px;border:1px solid #979797;border-radius:2px;background:linear-gradient(#f4f4f4 0,#ececec 45%,#d9d9d9 55%,#cdcdcd 100%);box-shadow:inset 0 0 0 1px #fafafa"></div>
<div class="ab" style="left:1083px;top:464px;width:17px;height:16px;background:#f0f0f0"></div>
<div class="grp" style="left:49px;top:495px;width:559px;height:100px"></div>
<div class="lblbg" style="left:56px;top:493px;width:70px"></div>
<div class="t" style="left:58px;top:489px;letter-spacing:-0.432px;">Email einlesen</div>
<div class="chk" style="left:58px;top:507px"></div>
<div class="t" style="left:73px;top:507px;letter-spacing:-0.355px;">im Email-Programm als gelesen markieren</div>
<div class="chk" style="left:58px;top:523px"></div>
<div class="t" style="left:73px;top:523px;letter-spacing:-0.364px;">aus dem Email-Programm löschen</div>
<div class="chk" style="left:58px;top:539px"></div>
<svg class="ab" style="left:58px;top:539px" width="13" height="13" viewBox="0 0 13 13"><path d="M3.2 6.8L5.3 10L9.8 3" fill="none" stroke="#2f3f88" stroke-width="1.8"/></svg>
<div class="t" style="left:73px;top:539px;letter-spacing:-0.123px;">Anlagen (Attachments) mit übernehmen</div>
<div class="grp" style="left:291px;top:509px;width:305px;height:49px"></div>
<div class="lblbg" style="left:299px;top:507px;width:75px"></div>
<div class="t" style="left:300px;top:503px;letter-spacing:-0.512px;">Welche Emails?</div>
<svg class="ab" style="left:298px;top:517px" width="12" height="12" viewBox="0 0 12 12"><circle cx="6" cy="6" r="5.5" fill="#fff" stroke="#8a8a8a" stroke-width="1"/><circle cx="6" cy="6" r="4.2" fill="url(#rf)"/></svg>
<div class="t" style="left:314px;top:517px;letter-spacing:-0.3px;">alle</div>
<svg class="ab" style="left:298px;top:530px" width="12" height="12" viewBox="0 0 12 12"><circle cx="6" cy="6" r="5.5" fill="#fff" stroke="#8a8a8a" stroke-width="1"/><circle cx="6" cy="6" r="4.2" fill="url(#rf)"/><circle cx="6" cy="6" r="3.3" fill="url(#rd)" stroke="#123f70" stroke-width="0.6"/></svg>
<div class="t" style="left:314px;top:530px;letter-spacing:-0.153px;">nur Emails mit Zuordnung zu Adresse/Ansprechpartner</div>
<svg class="ab" style="left:298px;top:543px" width="12" height="12" viewBox="0 0 12 12"><circle cx="6" cy="6" r="5.5" fill="#fff" stroke="#8a8a8a" stroke-width="1"/><circle cx="6" cy="6" r="4.2" fill="url(#rf)"/></svg>
<div class="t" style="left:314px;top:543px;letter-spacing:-0.146px;">nur Emails ohne Zuordnung zu Adresse/Ansprechpartner</div>
<div class="btn" style="left:59px;top:569px;width:335px;height:17px"></div>
<div class="t" style="left:187px;top:572px;letter-spacing:-0.181px;">Einlesen starten</div>
<div class="t" style="left:403px;top:573px;letter-spacing:-0.312px;">Es werden die Emails mit</div>
<svg class="ab" style="left:524px;top:573px" width="15" height="12" viewBox="0 0 15 12"><path d="M1.5 6L5 9.5L13.5 1.5" fill="none" stroke="#2a962a" stroke-width="2.6"/></svg>
<div class="t" style="left:541px;top:573px;letter-spacing:-0.253px;">eingelesen.</div>
</body></html>
